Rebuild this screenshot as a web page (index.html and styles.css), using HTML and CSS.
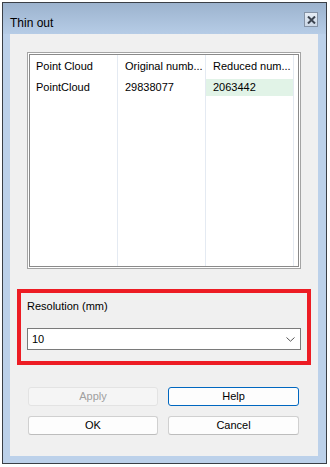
FILE: index.html
```html
<!DOCTYPE html>
<html lang="en">
  <head>
    <meta charset="UTF-8" />
    <meta name="viewport" content="width=device-width, initial-scale=1.0" />
    <title>Thin out</title>
    <link rel="stylesheet" href="styles.css">
  </head>

  <body>
    <div class="window">
      <div class="title-bar">
        <span class="title">Thin out</span>
        <span class="close-btn">
          <svg width="9" height="8" viewBox="0 0 9 8">
            <path d="M1 0.5 L8 7.5 M8 0.5 L1 7.5" stroke="#3c4450" stroke-width="2" />
          </svg>
        </span>
      </div>

      <div class="client">
        <div class="list-box">
          <div class="list-view">
            <div class="col">
              <div class="cell head">Point Cloud</div>
              <div class="cell">PointCloud</div>
            </div>
            <div class="col">
              <div class="cell head">Original numb...</div>
              <div class="cell">29838077</div>
            </div>
            <div class="col">
              <div class="cell head">Reduced num...</div>
              <div class="cell selected">2063442</div>
            </div>
          </div>
        </div>

        <div class="resolution">
          <div class="res-label">Resolution (mm)</div>
          <div class="combo">
            <span>10</span>
            <svg width="9" height="5" viewBox="0 0 9 5">
              <path d="M0.5 0.5 L4.5 4.2 L8.5 0.5" fill="none" stroke="#555" stroke-width="1" />
            </svg>
          </div>
        </div>

        <div class="buttons">
          <div class="btn disabled">Apply</div>
          <div class="btn default">Help</div>
          <div class="btn">OK</div>
          <div class="btn">Cancel</div>
        </div>
      </div>
    </div>
  </body>
</html>
```

FILE: styles.css
```css
* {
  margin: 0;
  padding: 0;
  box-sizing: border-box;
}

body {
  background: #fff;
  font-family: "Liberation Sans", Arial, sans-serif;
  font-size: 11px;
  color: #000;
}

.window {
  margin: 2px 0 0 2px;
  width: 325px;
  height: 462px;
  border: 1px solid #3a3f46;
  background: #bcd1ea;
  padding: 0 8px 7px 7px;
}

.title-bar {
  height: 31px;
  margin: 0 -8px 0 -7px;
  padding: 0 8px 0 7px;
  background: linear-gradient(#9cb3ce, #b6cce6);
  display: flex;
  align-items: center;
  justify-content: space-between;
}

.title {
  font-size: 12px;
  margin-top: 9px;
  color: #000;
}

.close-btn {
  width: 14px;
  height: 15px;
  margin-top: 2px;
  margin-right: 0;
  border: 1px solid #8593a6;
  background: linear-gradient(#e6edf6, #cbd7e6);
  display: flex;
  align-items: center;
  justify-content: center;
}

.client {
  height: 422px;
  background: #f0f0f0;
  padding-top: 18px;
}

.list-box {
  margin-left: 17px;
  width: 274px;
  height: 217px;
  border: 1px solid #a4a4a4;
  padding: 1px;
  background: #fff;
}

.list-view {
  height: 100%;
  border: 1px solid #8a8a8a;
  background: #fff;
  display: flex;
}

.col {
  width: 88px;
  border-right: 1px solid #e4eaf2;
}

.cell {
  height: 17px;
  line-height: 17px;
  padding-left: 7px;
  white-space: nowrap;
  overflow: hidden;
}

.cell.head {
  height: 24px;
  padding-top: 3px;
  line-height: 16px;
}

.col:first-child .cell {
  padding-left: 6px;
}

.cell.selected {
  background: #e1f3e7;
}

.resolution {
  margin: 20px 0 0 7px;
  width: 294px;
  height: 76px;
  border: 4px solid #ed1c24;
  padding: 5px 6px 0;
}

.res-label {
  height: 16px;
  line-height: 16px;
}

.combo {
  margin-top: 14px;
  height: 22px;
  border: 1px solid #7a7a7a;
  background: #fff;
  display: flex;
  align-items: center;
  justify-content: space-between;
  padding: 0 5px 0 4px;
}

.buttons {
  margin: 22px 0 0 18px;
  display: grid;
  grid-template-columns: 130px 131px;
  column-gap: 10px;
  row-gap: 10px;
}

.btn {
  height: 19px;
  line-height: 17px;
  text-align: center;
  border: 1px solid #d0d0d0;
  border-bottom-color: #bdbdbd;
  border-radius: 3px;
  background: #fdfdfd;
}

.btn.disabled {
  background: #f5f5f5;
  border-color: #e3e3e3;
  color: #a0a0a0;
}

.btn.default {
  border-color: #0067c0;
}
```
